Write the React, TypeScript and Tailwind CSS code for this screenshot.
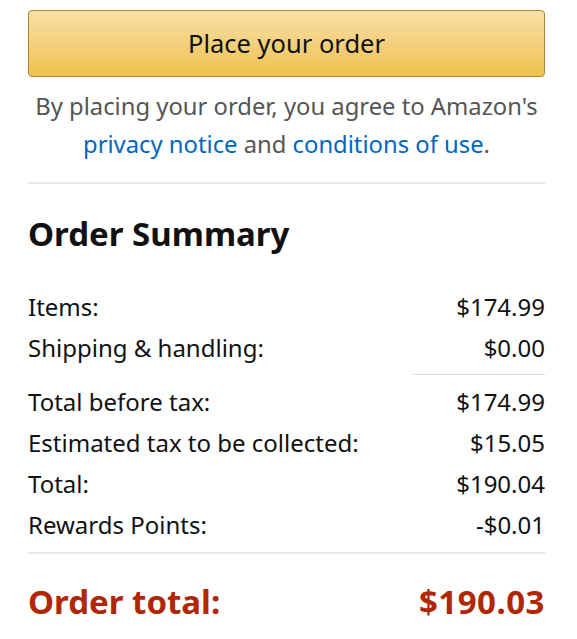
export default function App() {
  const rows1 = [
    ["Items:", "$174.99"],
    ["Shipping & handling:", "$0.00"],
  ];
  const rows2 = [
    ["Total before tax:", "$174.99"],
    ["Estimated tax to be collected:", "$15.05"],
    ["Total:", "$190.04"],
    ["Rewards Points:", "-$0.01"],
  ];
  return (
    <div
      className="w-[577px] h-[639px] overflow-hidden bg-white pl-[28px] pr-[32px] pt-[10px] text-[#111]"
      style={{ fontFamily: '"Noto Sans", Arial, sans-serif' }}
    >
      <button
        type="button"
        className="flex h-[67px] w-full items-center justify-center rounded-[4px] border border-[#a88734] bg-gradient-to-b from-[#f7dfa5] to-[#f0c14b] text-[25.5px] text-[#111]"
      >
        Place your order
      </button>
      <p className="mt-[10px] whitespace-nowrap text-center text-[23.8px] leading-[38px] text-[#555]">
        By placing your order, you agree to Amazon's
        <br />
        <a className="text-[#0066c0]">privacy notice</a> and{" "}
        <a className="text-[#0066c0]">conditions of use</a>.
      </p>
      <div className="mt-[19px] h-[2px] bg-[#e7e7e7]" />
      <h2 className="mt-[28px] text-[33px] font-bold leading-[44px]">Order Summary</h2>
      <div className="mt-[30px] text-[24px] leading-[41px]">
        {rows1.map(([l, v]) => (
          <div key={l} className="flex justify-between">
            <span>{l}</span>
            <span>{v}</span>
          </div>
        ))}
        <div className="my-[6px] ml-auto h-px w-[132px] bg-[#ddd]" />
        {rows2.map(([l, v]) => (
          <div key={l} className="flex justify-between">
            <span>{l}</span>
            <span>{v}</span>
          </div>
        ))}
      </div>
      <div className="mt-[7px] h-[2px] bg-[#e7e7e7]" />
      <div className="mt-[26px] flex justify-between text-[33px] font-bold leading-[44px] text-[#b12704]">
        <span>Order total:</span>
        <span className="tracking-[0.5px]">$190.03</span>
      </div>
    </div>
  );
}
